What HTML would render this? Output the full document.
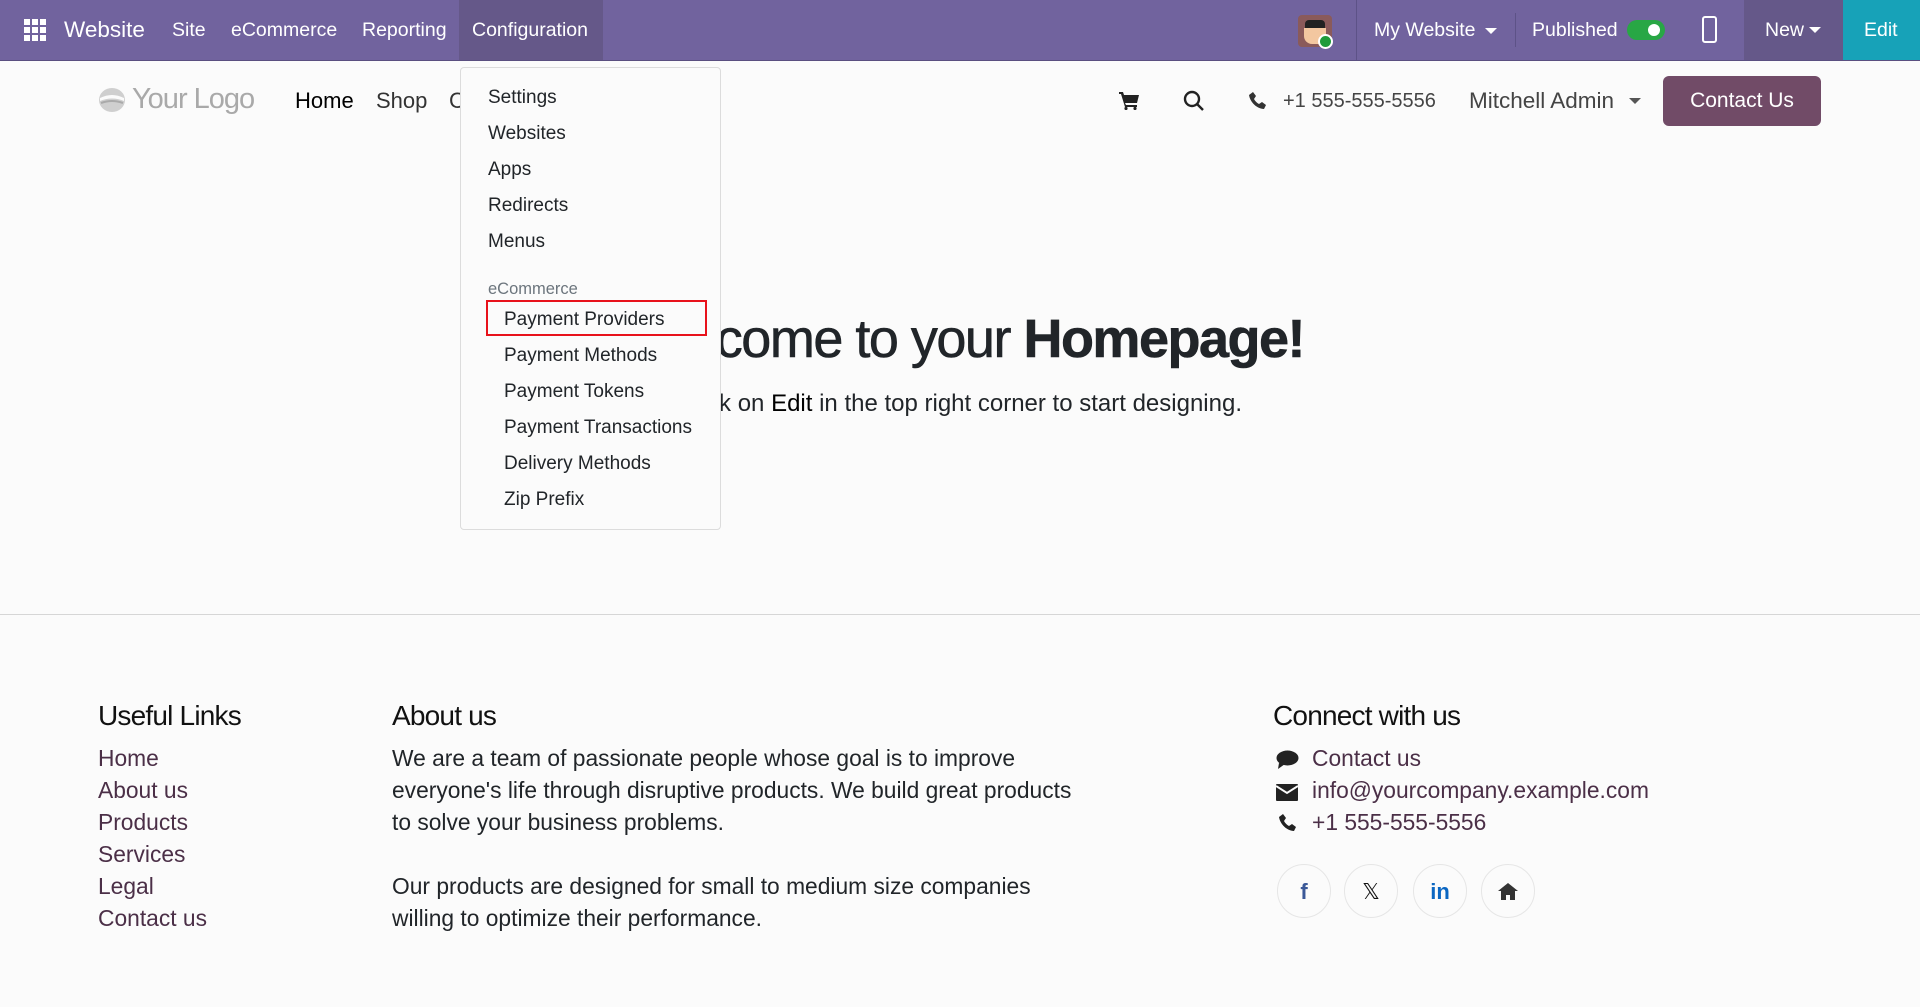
<!DOCTYPE html>
<html><head><meta charset="utf-8"><style>
*{box-sizing:border-box;margin:0;padding:0}
body{width:1920px;height:1007px;overflow:hidden;background:#fbfbfb;font-family:"Liberation Sans",sans-serif;color:#212529;position:relative}
.abs{position:absolute;white-space:nowrap}
.nav{position:absolute;left:0;top:0;width:1920px;height:61px;background:#71639e;border-bottom:1px solid #5a4f80;color:#fff}
.nav .t{position:absolute;top:0;line-height:60px;font-size:19.5px;color:#fff}
.dd{position:absolute;left:460px;top:67px;width:261px;height:463px;background:#fbfbfb;border:1px solid #dcdcdc;border-radius:4px}
.dd div{position:absolute;font-size:19px;color:#212529;line-height:22px}
.fl{position:absolute;left:98px;font-size:22.8px;color:#4b2f47}
.ft{font-size:22.8px;line-height:32px;color:#212529}
.h{font-size:28px;letter-spacing:-0.8px;color:#111}
.ci{position:absolute;width:54px;height:54px;border-radius:50%;border:1px solid #e6e6e6;background:#fbfbfb;top:864px;text-align:center;line-height:54px;font-size:22px;font-weight:bold}
</style></head><body>
<div class="nav">
  <svg class="abs" style="left:24px;top:19px" width="22" height="22" viewBox="0 0 22 22" fill="#fff"><rect x="0" y="0" width="6" height="6"/><rect x="8" y="0" width="6" height="6"/><rect x="16" y="0" width="6" height="6"/><rect x="0" y="8" width="6" height="6"/><rect x="8" y="8" width="6" height="6"/><rect x="16" y="8" width="6" height="6"/><rect x="0" y="16" width="6" height="6"/><rect x="8" y="16" width="6" height="6"/><rect x="16" y="16" width="6" height="6"/></svg>
  <div class="t" style="left:64px;font-size:22.5px">Website</div>
  <div class="t" style="left:172px">Site</div>
  <div class="t" style="left:231px">eCommerce</div>
  <div class="t" style="left:362px">Reporting</div>
  <div class="abs" style="left:459px;top:0;width:144px;height:60px;background:#655889"></div>
  <div class="t" style="left:472px">Configuration</div>
  <div class="abs" style="left:1298px;top:15px;width:34px;height:32px;border-radius:4px;background:#8a5a5a"></div>
  <div class="abs" style="left:1305px;top:20px;width:20px;height:10px;background:#222;border-radius:4px 4px 0 0"></div>
  <div class="abs" style="left:1304px;top:28px;width:22px;height:16px;background:#f3c7a0;border-radius:0 0 8px 8px"></div>
  <div class="abs" style="left:1318px;top:34px;width:15px;height:15px;border-radius:50%;background:#1e9b3a;border:2px solid #fff"></div>
  <div class="abs" style="left:1356px;top:0;width:1px;height:60px;background:#5d5287"></div>
  <div class="t" style="left:1374px">My Website</div>
  <div class="abs" style="left:1485px;top:28px;border-left:6px solid transparent;border-right:6px solid transparent;border-top:6px solid #fff"></div>
  <div class="abs" style="left:1515px;top:13px;width:1px;height:34px;background:#5d5287"></div>
  <div class="t" style="left:1532px">Published</div>
  <div class="abs" style="left:1627px;top:20px;width:38px;height:20px;border-radius:10px;background:#28a745"></div>
  <div class="abs" style="left:1648px;top:24px;width:12px;height:12px;border-radius:50%;background:#fff"></div>
  <div class="abs" style="left:1702px;top:16px;width:15px;height:27px;border:2px solid #fff;border-radius:3px"></div>
  <div class="abs" style="left:1744px;top:0;width:99px;height:60px;background:#655889"></div>
  <div class="t" style="left:1765px">New</div>
  <div class="abs" style="left:1809px;top:27px;border-left:6px solid transparent;border-right:6px solid transparent;border-top:6px solid #fff"></div>
  <div class="abs" style="left:1843px;top:0;width:77px;height:60px;background:#17a2b8"></div>
  <div class="t" style="left:1864px">Edit</div>
</div>
<svg class="abs" style="left:98px;top:87px" width="28" height="26" viewBox="0 0 28 26"><ellipse cx="14" cy="13" rx="13" ry="12" fill="#cfcfcf"/><path d="M2 11 Q14 5 26 11 L26 14 Q14 9 2 14Z" fill="#fbfbfb"/><path d="M3 16 Q14 12 25 16" stroke="#aaa" stroke-width="2" fill="none"/></svg>
<div class="abs" style="left:132px;top:83px;font-size:29px;color:#a9a9a9;letter-spacing:-1px">Your Logo</div>
<div class="abs" style="left:295px;top:88px;font-size:22px;color:#000">Home</div>
<div class="abs" style="left:376px;top:88px;font-size:22px;color:#333">Shop</div>
<div class="abs" style="left:449px;top:88px;font-size:22px;color:#333">C</div>
<svg class="abs" style="left:1119px;top:92px" width="20" height="18" viewBox="0 0 20 18" fill="#222"><path d="M0 0h4l1 3h15l-2 8H6l1 2h11v2H6L2 2H0z"/><circle cx="7" cy="16.5" r="1.6"/><circle cx="16" cy="16.5" r="1.6"/></svg>
<svg class="abs" style="left:1183px;top:90px" width="22" height="22" viewBox="0 0 22 22" fill="none" stroke="#222" stroke-width="2.4"><circle cx="9" cy="9" r="7"/><path d="M14 14l6 6"/></svg>
<svg class="abs" style="left:1249px;top:92px" width="18" height="18" viewBox="0 0 18 18" fill="#333"><path d="M4 0l3 4-2 3c1 2 3 4 5 5l3-2 4 3-2 4C8 17 1 10 0 3z"/></svg>
<div class="abs" style="left:1283px;top:90px;font-size:20px;color:#444">+1 555-555-5556</div>
<div class="abs" style="left:1469px;top:88px;font-size:22.5px;color:#444">Mitchell Admin</div>
<div class="abs" style="left:1629px;top:98px;border-left:6px solid transparent;border-right:6px solid transparent;border-top:6px solid #555"></div>
<div class="abs" style="left:1663px;top:76px;width:158px;height:50px;border-radius:6px;background:#714b67;color:#fff;font-size:21px;text-align:center;line-height:50px">Contact Us</div>
<div class="abs" style="right:616px;top:308px;text-align:right;font-size:54px;letter-spacing:-1.5px;color:#212529;-webkit-text-stroke:0.6px #212529">Welcome to your <b>Homepage!</b></div>
<div class="abs" style="right:678px;top:390px;text-align:right;font-size:24px;color:#212529">Click on <span style="color:#000">Edit</span> in the top right corner to start designing.</div>
<div class="dd">
  <div style="left:27px;top:19px">Settings</div>
  <div style="left:27px;top:55px">Websites</div>
  <div style="left:27px;top:91px">Apps</div>
  <div style="left:27px;top:127px">Redirects</div>
  <div style="left:27px;top:163px">Menus</div>
  <div style="left:27px;top:210px;font-size:16.5px;color:#6c757d">eCommerce</div>
  <div style="left:25px;top:232px;width:221px;height:36px;border:2px solid #e8121b"></div>
  <div style="left:43px;top:241px">Payment Providers</div>
  <div style="left:43px;top:277px">Payment Methods</div>
  <div style="left:43px;top:313px">Payment Tokens</div>
  <div style="left:43px;top:349px">Payment Transactions</div>
  <div style="left:43px;top:385px">Delivery Methods</div>
  <div style="left:43px;top:421px">Zip Prefix</div>
</div>
<div class="abs" style="left:0;top:614px;width:1920px;height:1px;background:#d6d6d6"></div>
<div class="abs h" style="left:98px;top:700px">Useful Links</div>
<div class="fl" style="top:745px">Home</div>
<div class="fl" style="top:777px">About us</div>
<div class="fl" style="top:809px">Products</div>
<div class="fl" style="top:841px">Services</div>
<div class="fl" style="top:873px">Legal</div>
<div class="fl" style="top:905px">Contact us</div>
<div class="abs h" style="left:392px;top:700px">About us</div>
<div class="abs ft" style="left:392px;top:742px">We are a team of passionate people whose goal is to improve<br>everyone's life through disruptive products. We build great products<br>to solve your business problems.<br><br>Our products are designed for small to medium size companies<br>willing to optimize their performance.</div>
<div class="abs h" style="left:1273px;top:700px">Connect with us</div>
<svg class="abs" style="left:1276px;top:750px" width="23" height="20" viewBox="0 0 23 20" fill="#222"><ellipse cx="11.5" cy="8" rx="11" ry="7.5"/><path d="M3 13l-1 6 7-5z"/></svg>
<svg class="abs" style="left:1276px;top:784px" width="22" height="17" viewBox="0 0 22 17" fill="#222"><rect width="22" height="17" rx="1"/><path d="M0 2l11 7 11-7" stroke="#fbfbfb" stroke-width="2" fill="none"/></svg>
<svg class="abs" style="left:1279px;top:814px" width="18" height="18" viewBox="0 0 18 18" fill="#222"><path d="M4 0l3 4-2 3c1 2 3 4 5 5l3-2 4 3-2 4C8 17 1 10 0 3z"/></svg>
<div class="fl" style="left:1312px;top:745px">Contact us</div>
<div class="fl" style="left:1312px;top:777px">info@yourcompany.example.com</div>
<div class="fl" style="left:1312px;top:809px">+1 555-555-5556</div>
<div class="ci" style="left:1277px;color:#3b5998">f</div>
<div class="ci" style="left:1344px;color:#111;font-weight:normal">𝕏</div>
<div class="ci" style="left:1413px;color:#0a66c2">in</div>
<svg class="abs" style="left:1498px;top:883px" width="20" height="17" viewBox="0 0 20 17" fill="#333"><path d="M10 0L0 8h3v9h5v-5h4v5h5V8h3z"/></svg>
<div class="ci" style="left:1481px;background:transparent"></div>
</body></html>
